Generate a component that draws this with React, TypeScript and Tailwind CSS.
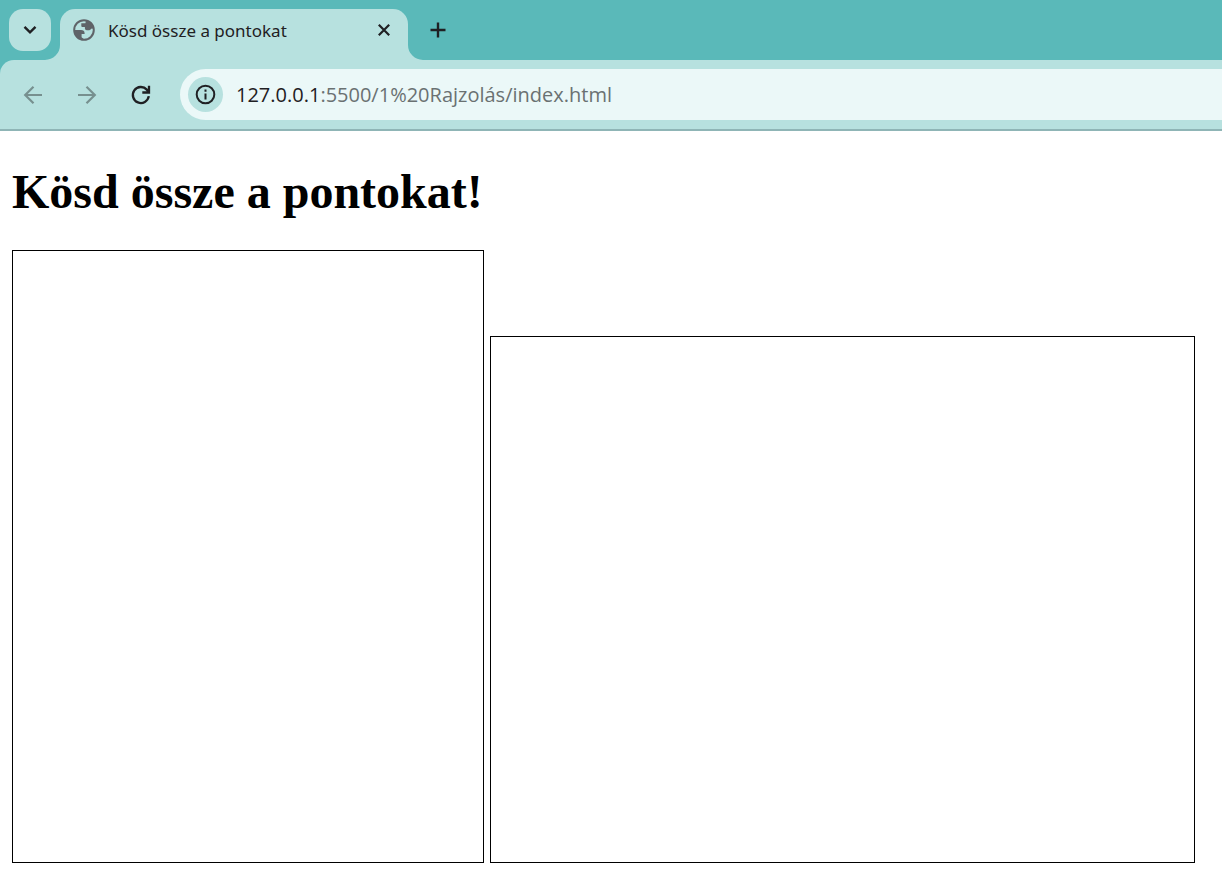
import React from "react";

const icon = "block shrink-0";

function TabStrip() {
  return (
    <div className="flex h-15 items-end bg-[#5ab9b9]">
      <button aria-label="Search tabs" className="ml-[9px] mb-[9px] flex h-[42px] w-[42px] shrink-0 items-center justify-center rounded-[14px] bg-[#b7e1df]">
        <svg className={icon} width="14" height="10" viewBox="0 0 14 10" fill="none" stroke="#1f2023" strokeWidth="2.4">
          <path d="M1.5 1.8 7 7.3l5.5-5.5" />
        </svg>
      </button>
      <div className="-ml-[6px] flex items-end">
        <svg className={icon} width="15" height="15" viewBox="0 0 15 15" fill="#b7e1df">
          <path d="M15 0v15H0A15 15 0 0 0 15 0z" />
        </svg>
        <div className="flex h-[51px] w-[348px] items-center rounded-t-[15px] bg-[#b7e1df] pr-4 pl-[13px] pb-[9px]">
          <svg className={icon} width="22" height="22" viewBox="0 0 22 22">
            <circle cx="11" cy="11" r="9.8" fill="none" stroke="#5f6368" strokeWidth="2" />
            <path fill="#5f6368" d="M1.5 11H8c2.300 0 3.600 1.200 3.600 3.200v.8h-3v3.200l2.600 2.300C5.500 20.800 1 16.500 1.500 11zM13 1.500l-.6 2.800H8.300v2.400c0 .8.500 1.300 1.300 1.300h2.300v1.300c0 1.200.8 1.900 1.900 1.900h2.400c.9 0 1.600-.6 1.900-1.400l2.900-.3C20.500 5.500 17.500 2.200 13 1.500z" />
          </svg>
          <span className="ml-[13px] flex-1 pt-0.5 text-[17px] leading-6 text-[#1f2023]">Kösd össze a pontokat</span>
          <button aria-label="Close tab">
            <svg className={icon} width="16" height="16" viewBox="0 0 16 16" fill="none" stroke="#1f2023" strokeWidth="2.2">
              <path d="m2.800 2.800 10.400 10.400m0-10.400L2.800 13.200" />
            </svg>
          </button>
        </div>
        <svg className={icon} width="15" height="15" viewBox="0 0 15 15" fill="#b7e1df">
          <path d="M0 0v15h15A15 15 0 0 1 0 0z" />
        </svg>
      </div>
      <button aria-label="New tab" className="mb-[22px] ml-[7px]">
        <svg className={icon} width="16" height="16" viewBox="0 0 16 16" fill="none" stroke="#1f2023" strokeWidth="2.4">
          <path d="M8 .5v15M.5 8h15" />
        </svg>
      </button>
    </div>
  );
}

function Toolbar() {
  return (
    <div className="bg-[#5ab9b9]">
      <div className="flex items-center rounded-tl-[14px] border-b-2 border-[#8fb5b6] bg-[#b7e1df] py-[9px] pl-[22px]">
        <button aria-label="Back">
          <svg className={icon} width="22" height="22" viewBox="0 0 22 22" fill="none" stroke="#77908f" strokeWidth="2.2">
            <path d="M20 11H3.500M11.500 2.700 3.200 11l8.300 8.300" />
          </svg>
        </button>
        <button aria-label="Forward" className="ml-8">
          <svg className={icon} width="22" height="22" viewBox="0 0 22 22" fill="none" stroke="#77908f" strokeWidth="2.2">
            <path d="M2 11h16.500M10.500 2.700l8.300 8.300-8.300 8.300" />
          </svg>
        </button>
        <button aria-label="Reload" className="ml-8">
          <svg className={icon} width="22" height="22" viewBox="0 0 22 22" fill="none" stroke="#1f2023" strokeWidth="2.3">
            <path d="M18.800 12.200A8 8 0 1 1 16.800 5.600L19 8M19 1.800v6.700h-6.700" />
          </svg>
        </button>
        <div className="ml-7 flex h-[51px] flex-1 items-center rounded-l-full bg-[#ebf8f8] pl-2">
          <button aria-label="Site information" className="flex h-[35px] w-[35px] shrink-0 items-center justify-center rounded-full bg-[#b7e1df]">
            <svg className={icon} width="21" height="21" viewBox="0 0 21 21" fill="none" stroke="#1f2023" strokeWidth="2">
              <circle cx="10.5" cy="10.5" r="8.8" />
              <path d="M10.500 9.500v6M10.500 5.500v2.200" />
            </svg>
          </button>
          <div className="relative ml-[13px] flex-1 font-['Open_Sans','Noto_Sans',sans-serif] text-[20px] leading-7">
            <div aria-hidden="true" className="text-[#6a7172]">
              <span className="text-[#1f2023]">127.0.0.1</span>:5500/1%20Rajzolás/index.html
            </div>
            <input aria-label="Address" defaultValue="127.0.0.1:5500/1%20Rajzolás/index.html" className="absolute inset-0 w-full bg-transparent text-transparent outline-none" />
          </div>
        </div>
      </div>
    </div>
  );
}

export default function App() {
  return (
    <div className="min-h-screen bg-white font-['Noto_Sans','Open_Sans',sans-serif]">
      <header>
        <TabStrip />
        <Toolbar />
      </header>
      <main className="px-3 pt-8">
        <h1 className="font-['Liberation_Serif',serif] text-[48px] leading-[57px] font-bold text-black">Kösd össze a pontokat!</h1>
        <div className="mt-[30px] flex items-end gap-[6px] pb-7">
          <canvas className="h-[613px] w-[472px] shrink-0 border border-black" />
          <canvas className="h-[527px] w-[705px] shrink-0 border border-black" />
        </div>
      </main>
    </div>
  );
}
